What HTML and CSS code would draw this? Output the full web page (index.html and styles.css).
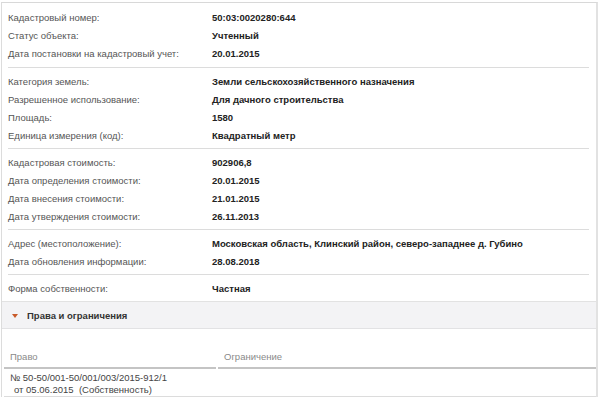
FILE: index.html
```html
<!DOCTYPE html>
<html>
<head>
<meta charset="utf-8">
<link rel="stylesheet" href="styles.css">
</head>
<body>
<div class="panel">
  <div class="group first">
    <div class="row"><span class="lbl">Кадастровый номер:</span><span class="val">50:03:0020280:644</span></div>
    <div class="row"><span class="lbl">Статус объекта:</span><span class="val">Учтенный</span></div>
    <div class="row"><span class="lbl">Дата постановки на кадастровый учет:</span><span class="val">20.01.2015</span></div>
  </div>
  <div class="group">
    <div class="row"><span class="lbl">Категория земель:</span><span class="val">Земли сельскохозяйственного назначения</span></div>
    <div class="row"><span class="lbl">Разрешенное использование:</span><span class="val">Для дачного строительства</span></div>
    <div class="row"><span class="lbl">Площадь:</span><span class="val">1580</span></div>
    <div class="row"><span class="lbl">Единица измерения (код):</span><span class="val">Квадратный метр</span></div>
  </div>
  <div class="group">
    <div class="row"><span class="lbl">Кадастровая стоимость:</span><span class="val">902906,8</span></div>
    <div class="row"><span class="lbl">Дата определения стоимости:</span><span class="val">20.01.2015</span></div>
    <div class="row"><span class="lbl">Дата внесения стоимости:</span><span class="val">21.01.2015</span></div>
    <div class="row"><span class="lbl">Дата утверждения стоимости:</span><span class="val">26.11.2013</span></div>
  </div>
  <div class="group">
    <div class="row"><span class="lbl">Адрес (местоположение):</span><span class="val">Московская область, Клинский район, северо-западнее д. Губино</span></div>
    <div class="row"><span class="lbl">Дата обновления информации:</span><span class="val">28.08.2018</span></div>
  </div>
  <div class="group last">
    <div class="row"><span class="lbl">Форма собственности:</span><span class="val">Частная</span></div>
  </div>
  <div class="section-head">
    <span class="caret"></span><span class="section-title">Права и ограничения</span>
  </div>
  <div class="rights">
    <div class="rights-head">
      <div class="col col-right">Право</div>
      <div class="col col-limit">Ограничение</div>
    </div>
    <div class="rights-row">
      <div class="col col-right">№ 50-50/001-50/001/003/2015-912/1<br><span class="indent">от 05.06.2015&nbsp; (Собственность)</span></div>
      <div class="col col-limit"></div>
    </div>
  </div>
</div>
</body>
</html>
```

FILE: styles.css
```css
html, body {
  margin: 0;
  padding: 0;
  background: #ffffff;
}
body {
  font-family: "Liberation Sans", Arial, sans-serif;
  font-size: 9.5px;
  color: #333;
  padding: 2px 2px 0 1px;
}
.panel {
  border-top: 1px solid #d8d8d8;
  border-left: 1px solid #dcdcdc;
  border-right: 2px solid #e2e2e2;
  height: 400px;
}
.group {
  margin: 0 7px 0 6px;
  padding: 4px 0 4px;
  border-bottom: 1px solid #dcdcdc;
}
.group.first {
  padding-top: 5px;
  padding-bottom: 5px;
}
.group.last {
  margin: 0;
  padding-left: 6px;
  border-bottom: 1px solid #e2e2e2;
}
.row {
  display: flex;
  height: 18px;
  align-items: center;
}
.lbl {
  width: 204px;
  flex: none;
  color: #555;
}
.val {
  font-weight: bold;
  color: #222;
}
.section-head {
  display: flex;
  align-items: center;
  height: 26px;
  background: #f3f3f5;
  border-bottom: 1px solid #e2e2e4;
  padding-left: 10px;
}
.caret {
  width: 0;
  height: 0;
  border-left: 3px solid transparent;
  border-right: 3px solid transparent;
  border-top: 4px solid #c85a2a;
  margin-right: 9px;
  margin-top: 1px;
}
.section-title {
  font-weight: bold;
  color: #333;
}
.rights {
  padding: 0 0 0 2px;
}
.rights-head {
  display: flex;
  gap: 2px;
  padding-top: 18px;
}
.rights-head .col {
  color: #8a8a8a;
  border-bottom: 2px solid #c4c4c4;
  height: 20px;
  line-height: 20px;
}
.col-right {
  width: 206px;
  flex: none;
  padding-left: 6px;
}
.col-limit {
  flex: 1;
  padding-left: 6px;
}
.rights-row {
  display: flex;
  gap: 2px;
  border-bottom: 1px solid #dcdcdc;
}
.rights-row .col {
  line-height: 12px;
  padding-top: 3px;
  padding-bottom: 0;
  color: #444;
}
.indent {
  padding-left: 4px;
}
```
